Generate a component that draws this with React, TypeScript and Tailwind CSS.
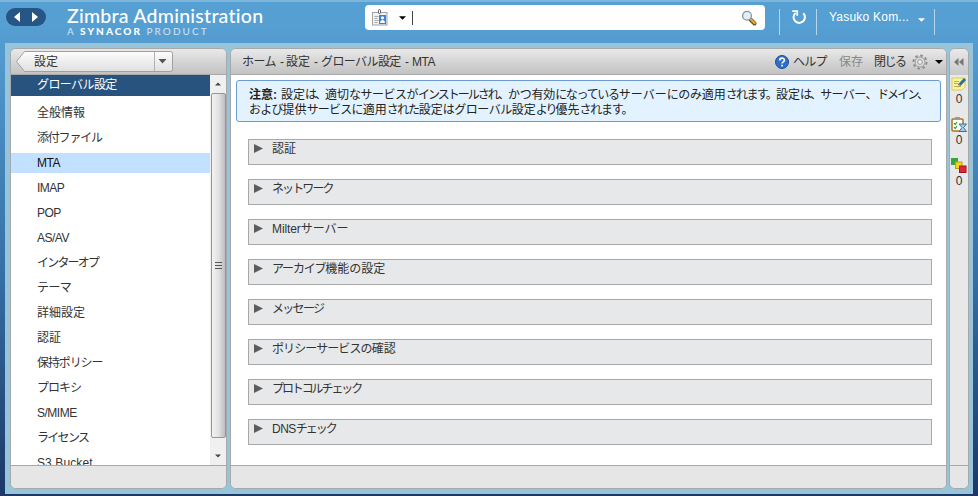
import React from 'react';

type Segment = [text: string, tracking?: string];

const sidebarItems: Segment[] = [
  ['全般情報'],
  ['添付ファイル', 'tracking-[-1.2px]'],
  ['MTA'],
  ['IMAP'],
  ['POP'],
  ['AS/AV'],
  ['インターオプ', 'tracking-[-1.8px]'],
  ['テーマ', 'tracking-[-0.6px]'],
  ['詳細設定'],
  ['認証'],
  ['保持ポリシー', 'tracking-[-1.1px]'],
  ['プロキシ', 'tracking-[-1px]'],
  ['S/MIME'],
  ['ライセンス', 'tracking-[-1.7px]'],
  ['S3 Bucket', 'tracking-[0.1px]'],
];

const sections: Segment[][] = [
  [['認証']],
  [['ネットワーク', 'tracking-[-1.9px]']],
  [['Milter', 'tracking-[-0.1px]'], ['サーバー']],
  [['アーカイブ', 'tracking-[-1.2px]'], ['機能の設定']],
  [['メッセージ', 'tracking-[-1.7px]']],
  [['ポリシーサービスの', 'tracking-[-0.9px]'], ['確認']],
  [['プロトコルチェック', 'tracking-[-2.1px]']],
  [['DNS'], ['チェック', 'tracking-[-2px]']],
];

const noticeFirst: Segment[] = [
  ['設定'],
  ['は、', 'tracking-[-2px]'],
  ['適切'],
  ['なサービスが', 'tracking-[-0.5px]'],
  ['インストールされ、', 'tracking-[-2px]'],
  ['かつ有効', 'tracking-[-0.2px]'],
  ['になっている', 'tracking-[-1.3px]'],
  ['サーバー'],
  ['にのみ', 'tracking-[-0.3px]'],
  ['適用'],
  ['されます。', 'tracking-[-1.7px]'],
  ['設定'],
  ['は、', 'tracking-[-2px]'],
  ['サーバー、', 'tracking-[-0.6px]'],
  ['ドメイン、', 'tracking-[-1.8px]'],
];

const noticeSecond: Segment[] = [
  ['および', 'tracking-[-0.8px]'],
  ['提供'],
  ['サービスに', 'tracking-[-0.8px]'],
  ['適用'],
  ['された', 'tracking-[-1.3px]'],
  ['設定'],
  ['はグローバル', 'tracking-[-0.5px]'],
  ['設定'],
  ['より', 'tracking-[-2px]'],
  ['優先'],
  ['されます。', 'tracking-[-1.2px]'],
];

const isLatin = (text: string) => /^[\x20-\x7e]+$/.test(text);

function Label({ parts }: { parts: Segment[] }) {
  return (
    <>
      {parts.map(([text, tracking], i) => (
        <span key={i} className={`text-[12px] ${tracking ?? (isLatin(text) ? 'tracking-[-0.5px]' : '')}`}>
          {text}
        </span>
      ))}
    </>
  );
}

function Caret({ className }: { className: string }) {
  return (
    <svg viewBox="0 0 8 4" className={className} fill="currentColor">
      <path d="M0 0h8L4 4z" />
    </svg>
  );
}

function SearchBar() {
  return (
    <div className="mt-[3px] ml-[101px] flex h-[25px] w-[400px] items-center rounded-[4px] bg-white">
      <svg viewBox="0 0 16 17" className="ml-[7px] h-[17px] w-[16px]">
        <rect x=".5" y="3.5" width="14.5" height="12.5" fill="#f2f2f2" stroke="#a3a3a3" />
        <path d="M2.5 7.5h4M2.5 9.5h3M2.5 11.5h4M2.5 13.5h3" stroke="#aaa" />
        <rect x="7" y="6" width="7" height="9" fill="#2f86d6" />
        <circle cx="10.5" cy="8.800" r="1.600" fill="#fff" />
        <path d="M8 14c0-4 5-4 5 0z" fill="#fff" />
        <rect x="6.500" y=".6" width="2" height="4" rx="1" fill="#fff" stroke="#555" />
      </svg>
      <Caret className="ml-[11px] h-[4px] w-[7px] text-black" />
      <div className="ml-[6px] h-[14px] w-px bg-[#444]" />
      <svg viewBox="0 0 16 16" className="mr-[8px] ml-auto h-[16px] w-[16px]">
        <path d="M9.500 9.500l4 4" stroke="#6d5024" strokeWidth="4" strokeLinecap="round" />
        <path d="M9.700 9.200l4 4" stroke="#e9a83c" strokeWidth="2.200" strokeLinecap="round" />
        <circle cx="6" cy="5.700" r="4.400" fill="#e2f0f8" stroke="#8d9499" strokeWidth="1.300" />
      </svg>
    </div>
  );
}

function TopBar() {
  return (
    <header className="flex h-[43px] shrink-0 items-start border-t-2 border-[#7db6dc] text-white">
      <div className="mt-[6px] ml-[6px] flex h-[18px] w-[40px] items-center justify-between rounded-full bg-[#265686] px-[8px]">
        <svg viewBox="0 0 6 10" className="h-[10px] w-[6px]"><path d="M6 0v10L0 5z" fill="#fff" /></svg>
        <svg viewBox="0 0 6 10" className="h-[10px] w-[6px]"><path d="M0 0v10l6-5z" fill="#fff" /></svg>
      </div>
      <div className="mt-[3px] ml-[21px] w-[197px] whitespace-nowrap font-[Lato,sans-serif]">
        <div className="text-[19.5px] leading-[22px] font-medium tracking-[0.25px]">Zimbra Administration</div>
        <div className="-mt-px text-[10px] leading-[11px] tracking-[2.05px] text-[#cfe5f5]">
          A <b className="font-black text-white">SYNACOR</b> PRODUCT
        </div>
      </div>
      <SearchBar />
      <div className="mt-[7px] ml-[14px] h-[26px] w-px bg-[#b3d6ee]" />
      <svg viewBox="0 0 16 16" className="mt-[7px] ml-[11px] h-[16px] w-[16px]" fill="none" stroke="#fff" strokeWidth="2">
        <path d="M4.500 3.900a5.700 5.700 0 1 0 7.800.3" />
        <path d="M1.200 2.200h5v4.500" strokeWidth="1.800" />
      </svg>
      <div className="mt-[7px] ml-[9px] h-[26px] w-px bg-[#b3d6ee]" />
      <div className="mt-[7px] ml-[12px] w-[82px] whitespace-nowrap text-[12px] leading-[16px] tracking-[0.22px]">Yasuko Kom...</div>
      <Caret className="mt-[16px] ml-[7px] h-[4px] w-[7px] text-white" />
      <div className="mt-[7px] ml-[9px] h-[26px] w-px bg-[#b3d6ee]" />
    </header>
  );
}

function Sidebar() {
  return (
    <aside className="flex w-[217px] shrink-0 flex-col overflow-hidden rounded-[6px] border border-[#a5a9ab] bg-white">
      <div className="flex h-[26px] shrink-0 items-start border-b border-[#a9a9a9] bg-linear-to-b from-[#e9e9e9] to-[#c2c2c2]">
        <div className="relative mt-[2px] ml-[5px] h-[21px] w-[157px]">
          <svg viewBox="0 0 157 21" className="absolute inset-0 h-[21px] w-[157px]">
            <defs>
              <linearGradient id="crumb" x1="0" y1="0" x2="0" y2="1">
                <stop offset="0" stopColor="#fdfdfd" />
                <stop offset="1" stopColor="#dfdfdf" />
              </linearGradient>
            </defs>
            <path d="M8.500.5H154.500a2 2 0 0 1 2 2v16a2 2 0 0 1-2 2H8.500L.5 10.500z" fill="url(#crumb)" stroke="#a0a0a0" />
            <path d="M138.500 1v19" stroke="#b0b0b0" />
            <path d="M142.500 8h8l-4 4.500z" fill="#555" />
          </svg>
          <span className="relative ml-[18px] block text-[12px] leading-[22px] text-[#333]">設定</span>
        </div>
      </div>
      <div className="flex min-h-0 flex-1">
        <nav className="flex-1 overflow-hidden">
          <div className="mb-[7px] h-[21px] bg-[#28537f] pl-[26px] text-[12px] leading-[20px] tracking-[-0.6px] text-white">グローバル設定</div>
          {sidebarItems.map((item) => (
            <div
              key={item[0]}
              className={`mb-[5px] flex h-[20px] pl-[26px] leading-[20px] whitespace-nowrap ${item[0] === 'MTA' ? 'bg-[#c2e0ff] text-[#111]' : 'text-[#333]'}`}
            >
              <Label parts={[item]} />
            </div>
          ))}
        </nav>
        <div className="flex w-[16px] shrink-0 flex-col items-center bg-[#f0f0f1]">
          <Caret className="mt-[7px] h-[4px] w-[6px] rotate-180 text-[#444]" />
          <div className="mt-[7px] flex w-[15px] flex-1 flex-col items-center justify-center gap-[2px] rounded-[2px] border border-[#969696] bg-linear-to-r from-[#f3f3f3] via-[#e2e2e3] to-[#bcbcc2]">
            <div className="h-px w-[7px] bg-[#555]" />
            <div className="h-px w-[7px] bg-[#555]" />
            <div className="h-px w-[7px] bg-[#555]" />
          </div>
          <Caret className="mt-[16px] mb-[7px] h-[4px] w-[6px] text-[#444]" />
        </div>
      </div>
      <div className="h-[23px] shrink-0 border-t border-[#a9a9a9] bg-[#e6e6e6]" />
    </aside>
  );
}

function Gear() {
  return (
    <svg viewBox="0 0 16 16" className="h-[16px] w-[16px]" fill="none">
      <circle cx="8" cy="8" r="6.600" stroke="#8f8f8f" strokeWidth="2" strokeDasharray="2.600 2.584" />
      <circle cx="8" cy="8" r="5" fill="#ddd" stroke="#999" strokeWidth="1" />
      <circle cx="8" cy="8" r="2.400" fill="#ececec" stroke="#999" />
    </svg>
  );
}

function MainPanel() {
  return (
    <main className="ml-[3px] flex w-[717px] shrink-0 flex-col overflow-hidden rounded-[6px] border border-[#a5a9ab] bg-white text-[#333]">
      <div className="flex h-[26px] shrink-0 items-center border-b border-[#a9a9a9] bg-linear-to-b from-[#e9e9e9] to-[#c2c2c2] pt-px pl-[11px] text-[12px] whitespace-nowrap">
        <span className="w-[38px] tracking-[-0.6px]">ホーム</span>
        <span className="w-[6px]">-</span>
        <span className="w-[28px]">設定</span>
        <span className="w-[7px]">-</span>
        <span className="w-[84px] tracking-[-0.6px]">グローバル設定</span>
        <span className="w-[7px]">-</span>
        <span className="tracking-[-0.5px]">MTA</span>
        <svg viewBox="0 0 14 14" className="ml-auto h-[14px] w-[14px]">
          <circle cx="7" cy="7" r="6.500" fill="#2b6fca" stroke="#1d4f99" />
          <path d="M4.700 5.500c0-3.200 4.700-3 4.700-.3 0 1.700-2.300 1.600-2.300 3.300M7.100 9.800v1.700" fill="none" stroke="#fff" strokeWidth="1.700" />
        </svg>
        <span className="ml-[4px] w-[46px] tracking-[-0.7px]">ヘルプ</span>
        <span className="w-[35px] text-[#888]">保存</span>
        <span className="w-[38px] tracking-[-1.5px]">閉じる</span>
        <Gear />
        <Caret className="mr-[3px] ml-[7px] h-[4px] w-[8px] text-black" />
      </div>
      <div className="min-h-0 flex-1">
        <div className="mt-[5px] ml-[5px] h-[42px] w-[705px] rounded-[3px] border border-[#6c9ad0] bg-[#e2f3ff] pt-[7px] pl-[12px] leading-[15px] whitespace-nowrap text-[#222]">
          <div className="flex h-[15px]">
            <b className="w-[32px] text-[12px]">注意:</b>
            <Label parts={noticeFirst} />
          </div>
          <div className="flex h-[15px]">
            <Label parts={noticeSecond} />
          </div>
        </div>
        <div className="mt-[17px] ml-[17px] flex w-[684px] flex-col gap-[14px]">
          {sections.map((parts) => (
            <div key={parts[0][0]} className="flex h-[26px] items-start border border-[#a8a8a8] bg-[#e7e8ea] leading-[18px]">
              <svg viewBox="0 0 9 9" className="mt-[4px] ml-[5px] h-[9px] w-[9px]"><path d="M0 0l9 4.500L0 9z" fill="#5b5c5e" /></svg>
              <div className="ml-[9px] flex whitespace-nowrap">
                <Label parts={parts} />
              </div>
            </div>
          ))}
        </div>
      </div>
      <div className="h-[23px] shrink-0 border-t border-[#a9a9a9] bg-[#e6e6e6]" />
    </main>
  );
}

function TaskRail() {
  return (
    <aside className="ml-[2px] flex w-[20px] shrink-0 flex-col items-center overflow-hidden rounded-[6px] border border-[#a5a9ab] bg-[#e8e8e8] text-[12px] leading-[15px] text-[#333]">
      <div className="flex h-[26px] w-full shrink-0 items-center justify-center bg-linear-to-b from-[#e9e9e9] to-[#c8c8c8]">
        <svg viewBox="0 0 10 8" className="h-[8px] w-[10px]"><path d="M4.500 0v8L0 4zM9.500 0v8L5 4z" fill="#777" /></svg>
      </div>
      <svg viewBox="0 0 16 16" className="mt-px h-[16px] w-[16px] shrink-0">
        <path d="M1 2h13v9l-3 3H1z" fill="#fbf59a" stroke="#d5cb62" />
        <path d="M3 5.500h5M3 7.500h4M3 10.500h7" stroke="#b7ad55" />
        <path d="M14 3L8 9.500" stroke="#2d7096" strokeWidth="3" />
        <path d="M8.500 8l-2 3.500 3.500-1.500z" fill="#d79b4a" />
      </svg>
      <span>0</span>
      <svg viewBox="0 0 16 16" className="mt-[10px] h-[16px] w-[16px] shrink-0">
        <rect x="1" y="2" width="11" height="12" rx="1" fill="#fff" stroke="#a87425" strokeWidth="1.500" />
        <rect x="4" y="0" width="5" height="3" fill="#999" />
        <path d="M3 6l1.200 1.500L6 5M3 10l1.200 1.500L6 9" fill="none" stroke="#2d9b32" strokeWidth="1.200" />
        <path d="M8 7h7.500L12.500 10.500 15.500 14.500H8l3-4z" fill="#a5cde6" stroke="#377398" />
      </svg>
      <span>0</span>
      <svg viewBox="0 0 16 16" className="mt-[10px] h-[16px] w-[16px] shrink-0">
        <rect x="0" y="0" width="7" height="7" fill="#3aa53b" />
        <rect x="4.500" y="4" width="6.500" height="6.500" fill="#f4d31d" stroke="#c69b0c" />
        <rect x="8.500" y="8" width="6.500" height="6.500" fill="#dd2733" stroke="#a51220" />
      </svg>
      <span>0</span>
      <div className="mt-auto h-[23px] w-full shrink-0 border-t border-[#a9a9a9] bg-[#e6e6e6]" />
    </aside>
  );
}

export default function App() {
  return (
    <div className="flex h-[496px] w-[978px] flex-col overflow-hidden bg-linear-to-b from-[#569fd3] from-5% via-[#3570a5] via-55% to-[#1c3867] font-['Liberation_Sans','Noto_Sans_CJK_JP',sans-serif]">
      <TopBar />
      <div className="mx-[5px] mb-[2px] flex min-h-0 flex-1 bg-[#98c4d9] pt-[5px] pb-[5px] pl-[5px]">
        <Sidebar />
        <MainPanel />
        <TaskRail />
      </div>
    </div>
  );
}
